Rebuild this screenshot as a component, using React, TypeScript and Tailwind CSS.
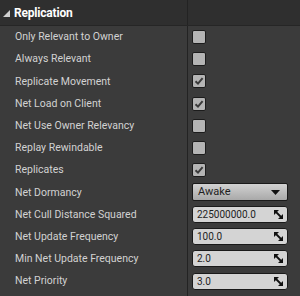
import React from 'react'

type Row =
  | { label: string; kind: 'check'; checked: boolean }
  | { label: string; kind: 'select'; value: string }
  | { label: string; kind: 'number'; value: string }

const rows: Row[] = [
  { label: 'Only Relevant to Owner', kind: 'check', checked: false },
  { label: 'Always Relevant', kind: 'check', checked: false },
  { label: 'Replicate Movement', kind: 'check', checked: true },
  { label: 'Net Load on Client', kind: 'check', checked: true },
  { label: 'Net Use Owner Relevancy', kind: 'check', checked: false },
  { label: 'Replay Rewindable', kind: 'check', checked: false },
  { label: 'Replicates', kind: 'check', checked: true },
  { label: 'Net Dormancy', kind: 'select', value: 'Awake' },
  { label: 'Net Cull Distance Squared', kind: 'number', value: '225000000.0' },
  { label: 'Net Update Frequency', kind: 'number', value: '100.0' },
  { label: 'Min Net Update Frequency', kind: 'number', value: '2.0' },
  { label: 'Net Priority', kind: 'number', value: '3.0' },
]

function CheckBox({ checked }: { checked: boolean }) {
  return (
    <div className="w-[14px] h-[14px] rounded-[2px] border border-[#1c1c1c] bg-[#b4b4b4] flex items-center justify-center">
      {checked && (
        <svg width="10" height="10" viewBox="0 0 10 10">
          <path d="M1.5 5.2 L4 7.6 L8.6 2.2" fill="none" stroke="#3a3a3a" strokeWidth="2" />
        </svg>
      )}
    </div>
  )
}

function SpinIcon() {
  return (
    <svg width="9" height="9" viewBox="0 0 9 9">
      <polygon points="0,0 5,0 0,5" fill="#111" />
      <polygon points="9,9 4,9 9,4" fill="#111" />
      <line x1="1" y1="1" x2="8" y2="8" stroke="#111" strokeWidth="1.8" />
    </svg>
  )
}

export default function App() {
  return (
    <div
      className="w-[300px] h-[296px] bg-[#3b3b3b] overflow-hidden text-[#d2d2d2]"
      style={{ fontFamily: 'Roboto, "Noto Sans", sans-serif' }}
    >
      {/* HEADER */}
      <div className="h-[26px] bg-[#2f2f2f] border-b border-[#262626] flex items-center pl-[3px]">
        <svg width="8" height="8" viewBox="0 0 8 8" className="mr-[3px] mt-[2px]">
          <polygon points="7,0 7,7 0,7" fill="#d0d0d0" />
        </svg>
        <span className="text-[12px] font-bold text-white tracking-[-0.2px]">Replication</span>
        <div className="ml-auto h-full w-[113px] border-l border-[#232323]" />
      </div>

      {/* ROWS */}
      <div className="flex">
        <div className="w-[187px] flex flex-col">
          {rows.map((row) => (
            <div key={row.label} className="h-[22.2px] flex items-center pl-[15px] text-[10.5px]">
              {row.label}
            </div>
          ))}
        </div>
        <div className="w-px bg-[#232323] h-[280px]" />
        <div className="flex-1 flex flex-col pl-[4px] pr-[12px]">
          {rows.map((row) => (
            <div key={row.label} className="h-[22.2px] flex items-center">
              {row.kind === 'check' && <CheckBox checked={row.checked} />}
              {row.kind === 'select' && (
                <div className="w-full h-[18px] rounded-[2px] border border-[#1a1a1a] bg-gradient-to-b from-[#d2d2d2] to-[#a9a9a9] flex items-center px-[5px] text-[11px] text-[#1e1e1e]">
                  {row.value}
                  <svg width="9" height="5" viewBox="0 0 9 5" className="ml-auto mr-[2px]">
                    <polygon points="0,0 9,0 4.5,5" fill="#111" />
                  </svg>
                </div>
              )}
              {row.kind === 'number' && (
                <div className="w-full h-[17px] rounded-[3px] border border-[#1a1a1a] bg-[#d4d4d4] flex items-center pl-[4px] pr-[4px] text-[10px] text-[#1e1e1e]">
                  {row.value}
                  <span className="ml-auto flex">
                    <SpinIcon />
                  </span>
                </div>
              )}
            </div>
          ))}
        </div>
      </div>
    </div>
  )
}
